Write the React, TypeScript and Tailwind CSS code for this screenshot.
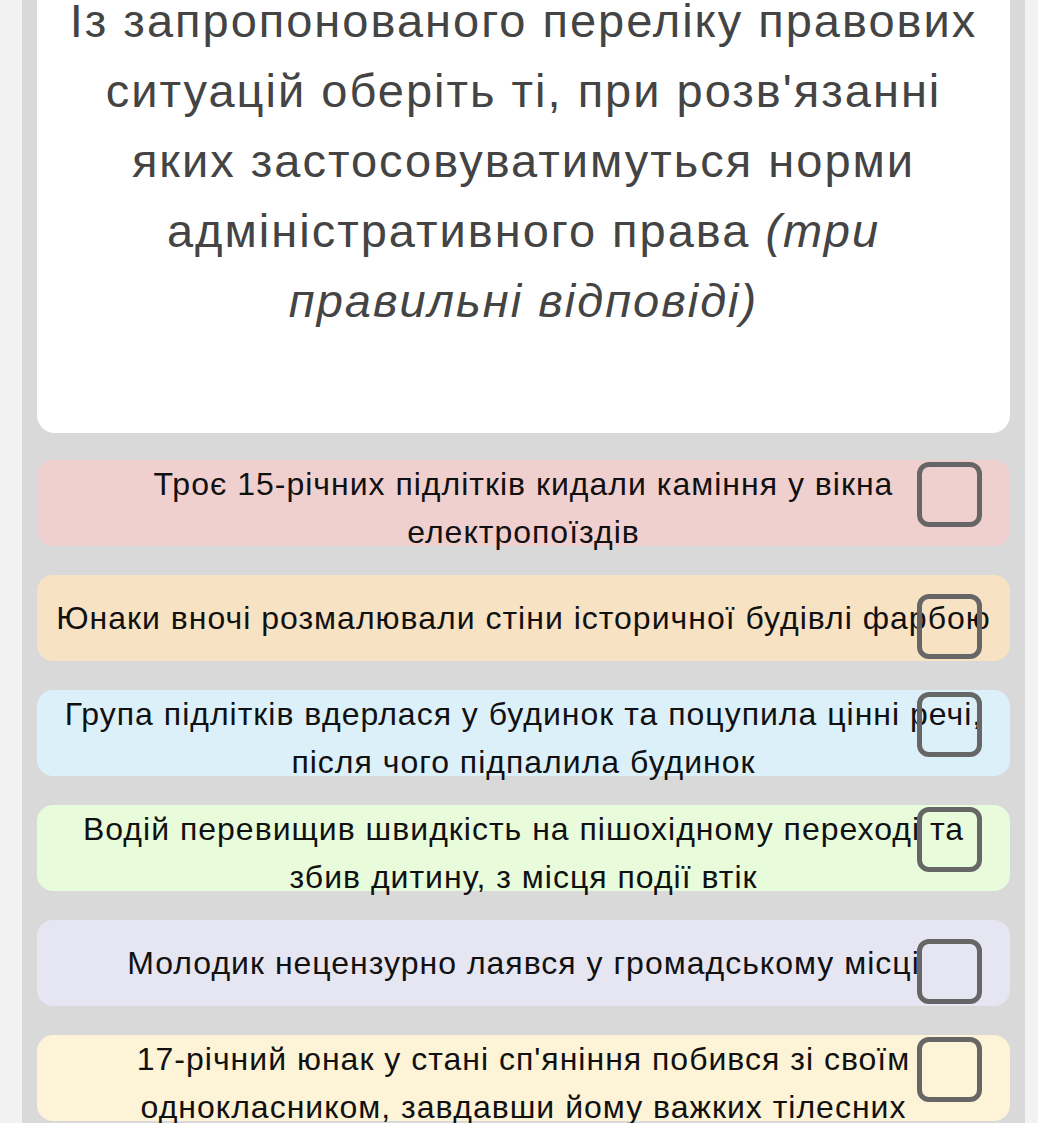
import React from "react";

type Opt = { text: string; bg: string; lines: number };

const options: Opt[] = [
  { text: "Троє 15-річних підлітків кидали каміння у вікна електропоїздів", bg: "bg-[#f0cfcf]", lines: 2 },
  { text: "Юнаки вночі розмалювали стіни історичної будівлі фарбою", bg: "bg-[#f8e2c4]", lines: 1 },
  { text: "Група підлітків вдерлася у будинок та поцупила цінні речі, після чого підпалила будинок", bg: "bg-[#dcf0fa]", lines: 2 },
  { text: "Водій перевищив швидкість на пішохідному переході та збив дитину, з місця події втік", bg: "bg-[#e8fcdc]", lines: 2 },
  { text: "Молодик нецензурно лаявся у громадському місці", bg: "bg-[#e6e6f3]", lines: 1 },
  { text: "17-річний юнак у стані сп'яніння побився зі своїм однокласником, завдавши йому важких тілесних ушкоджень", bg: "bg-[#fdf3d6]", lines: 3 },
];

export default function App() {
  return (
    <div
      className="w-[1038px] h-[1123px] overflow-hidden bg-[#f2f2f2] flex"
      style={{ fontFamily: '"Liberation Sans", Arial, sans-serif' }}
    >
      <div className="ml-[22px] w-[1003px] bg-[#d9d9d9] px-[15px] flex flex-col">
        <div className="bg-white rounded-b-[18px] px-[10px] pb-[97px] mt-[-14px]">
          <p className="text-[47px] leading-[70px] tracking-[2px] text-[#444444] text-center">
            Із запропонованого переліку правових
            <br />
            ситуацій оберіть ті, при розв'язанні
            <br />
            яких застосовуватимуться норми
            <br />
            адміністративного права <i>(три</i>
            <br />
            <i>правильні відповіді)</i>
          </p>
        </div>
        <div className="mt-[27px] flex flex-col gap-[29px]">
          {options.map((o, i) => (
            <div
              key={i}
              className={`relative h-[86px] shrink-0 rounded-[16px] ${o.bg} px-[14px] flex justify-center ${
                o.lines === 1 ? "items-center" : "items-start"
              }`}
            >
              <p className="text-[32px] leading-[48px] tracking-[1px] text-[#111111] text-center">{o.text}</p>
              <div
                className={`absolute right-[28px] w-[65px] h-[65px] rounded-[12px] border-[5px] border-[#666666] ${
                  o.lines === 1 ? "top-[19px]" : "top-[2px]"
                }`}
              />
            </div>
          ))}
        </div>
      </div>
    </div>
  );
}
